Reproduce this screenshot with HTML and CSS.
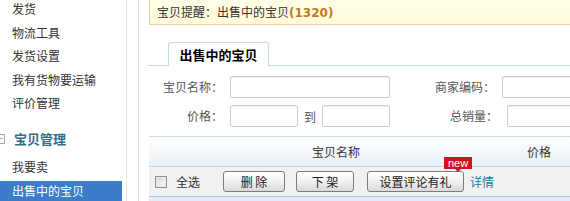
FILE: index.html
```html
<!DOCTYPE html>
<html lang="zh-CN">
<head>
<meta charset="utf-8">
<title>出售中的宝贝</title>
<link rel="stylesheet" href="styles.css">
</head>
<body>
<div class="page">
  <aside class="sidebar">
    <ul class="menu menu-top">
      <li>发货</li>
      <li>物流工具</li>
      <li>发货设置</li>
      <li>我有货物要运输</li>
      <li>评价管理</li>
    </ul>
    <div class="group-title"><span class="toggle"></span>宝贝管理</div>
    <ul class="menu menu-sub">
      <li>我要卖</li>
      <li class="active">出售中的宝贝</li>
    </ul>
  </aside>
  <main class="content">
    <div class="notice">宝贝提醒：出售中的宝贝<b class="count">(1320)</b></div>
    <div class="tabs"><div class="tab">出售中的宝贝</div></div>
    <div class="search">
      <div class="row">
        <span class="lbl lbl-a">宝贝名称：</span><span class="in in-name"></span>
        <span class="lbl lbl-b">商家编码：</span><span class="in in-code"></span>
      </div>
      <div class="row">
        <span class="lbl lbl-a">价格：</span><span class="in in-price"></span>
        <span class="to">到</span><span class="in in-price"></span>
        <span class="lbl lbl-c">总销量：</span><span class="in in-code"></span>
      </div>
    </div>
    <div class="thead">
      <div class="th th-name">宝贝名称</div>
      <div class="th th-price">价格</div>
    </div>
    <div class="toolbar">
      <span class="check"></span>
      <span class="check-label">全选</span>
      <span class="btn btn-del">删 除</span>
      <span class="btn btn-down">下 架</span>
      <span class="btn btn-gift">设置评论有礼<span class="badge">new</span></span>
      <a class="detail">详情</a>
    </div>
    <div class="after"></div>
  </main>
</div>
</body>
</html>
```

FILE: styles.css
```css
html, body {
  margin: 0;
  padding: 0;
  background: #fff;
}
body {
  width: 570px;
  height: 201px;
  overflow: hidden;
  font-family: "Noto Sans CJK SC", "Noto Sans", sans-serif;
  font-size: 12px;
  color: #333;
}
.page {
  display: flex;
  align-items: flex-start;
  width: 570px;
  height: 201px;
  overflow: hidden;
}

/* sidebar */
.sidebar {
  width: 126px;
  height: 201px;
  flex-shrink: 0;
  overflow: hidden;
  border-right: 1px solid #e3e3e3;
}
.menu {
  list-style: none;
  margin: 0;
  padding: 0;
}
.menu li {
  padding-left: 12px;
  margin-right: 4px;
  white-space: nowrap;
}
.menu-top {
  margin-top: -3px;
}
.menu-top li {
  height: 23.5px;
  line-height: 23.5px;
}
.group-title {
  display: flex;
  align-items: center;
  margin-top: 12px;
  height: 24px;
  line-height: 24px;
  font-size: 13px;
  font-weight: bold;
  color: #336e86;
}
.toggle {
  width: 8px;
  height: 8px;
  margin-left: -5px;
  margin-right: 9px;
  border: 1px solid #a9a9a9;
  background: linear-gradient(#a9a9a9, #a9a9a9) center / 5px 1px no-repeat, #fff;
}
.menu-sub {
  margin-top: 4px;
}
.menu-sub li {
  height: 24px;
  line-height: 24px;
}
.menu-sub li.active {
  margin-top: 2px;
  height: 22px;
  line-height: 20px;
  background: #3c7dca;
  color: #fff;
}

/* content */
.content {
  width: 560px;
  flex-shrink: 0;
  margin-left: 11px;
  border-left: 1px solid #dadada;
  padding-left: 10px;
  height: 201px;
  overflow: hidden;
}
.notice {
  height: 24px;
  line-height: 24px;
  border: 1px solid #e6d2a5;
  border-top: none;
  background: linear-gradient(#fffde8, #fffad8);
  padding-left: 7px;
  color: #333;
  white-space: nowrap;
}
.count {
  font-family: "DejaVu Sans", sans-serif;
  font-size: 12px;
  font-weight: bold;
  color: #c07a1f;
}
.tabs {
  display: flex;
  align-items: flex-end;
  margin-top: 17px;
  padding-left: 20px;
  margin-left: -1px;
  border-bottom: 1px solid #c8dbe3;
}
.tab {
  width: 99px;
  height: 23px;
  margin-bottom: -1px;
  border: 1px solid #c8dbe3;
  border-bottom: none;
  border-radius: 3px 3px 0 0;
  background: #fff;
  text-align: center;
  line-height: 23px;
  font-size: 13px;
  font-weight: bold;
  color: #000;
}

/* search form */
.search {
  padding-top: 10px;
  padding-bottom: 9px;
}
.row {
  display: flex;
  align-items: center;
  height: 22px;
  white-space: nowrap;
}
.row + .row {
  margin-top: 7px;
}
.lbl {
  text-align: right;
  color: #555;
  line-height: 22px;
}
.lbl-a {
  width: 74px;
  margin-right: 7px;
}
.lbl-b {
  width: 105px;
  margin-right: 7px;
}
.lbl-c {
  width: 108px;
  margin-right: 9px;
}
.in {
  box-sizing: border-box;
  height: 22px;
  border: 1px solid #cdcdcd;
  border-radius: 2px;
  background: #fff;
  box-shadow: inset 0 1px 0 #f0f0f0;
}
.in-name {
  width: 160px;
}
.in-code {
  width: 120px;
}
.in-price {
  width: 68px;
}
.to {
  width: 24px;
  text-align: center;
  color: #555;
}

/* table header */
.thead {
  display: flex;
  height: 29px;
  line-height: 29px;
  border-top: 1px solid #cbdde4;
  border-bottom: 1px solid #c4d6e6;
  background: linear-gradient(#ffffff, #eaf0f5);
  color: #333;
}
.th-name {
  width: 374px;
  text-align: center;
}
.th-price {
  padding-left: 4px;
}

/* toolbar */
.toolbar {
  display: flex;
  align-items: center;
  height: 29px;
  background: #eff1f3;
  border-bottom: 1px solid #adc4e3;
  white-space: nowrap;
}
.check {
  box-sizing: border-box;
  width: 12px;
  height: 12px;
  margin-left: 6px;
  border: 1px solid #8f8f8f;
  background: linear-gradient(135deg, #d6d6d6, #fafafa);
  box-shadow: inset 0 0 0 1px #e9e9e9;
}
.check-label {
  margin-left: 9px;
  color: #333;
}
.btn {
  position: relative;
  box-sizing: border-box;
  height: 21px;
  line-height: 19px;
  border: 1px solid #7d7d7d;
  border-radius: 3px;
  background: linear-gradient(#ffffff, #f3f3f3 45%, #d9d9d9);
  text-align: center;
  color: #222;
}
.btn-del {
  width: 62px;
  margin-left: 23px;
}
.btn-down {
  width: 58px;
  margin-left: 11px;
}
.btn-gift {
  width: 97px;
  margin-left: 13px;
}
.badge {
  position: absolute;
  left: 76px;
  top: -15px;
  width: 28px;
  height: 12px;
  line-height: 12px;
  background: #d5121b;
  color: #fff;
  font-family: "Liberation Sans", sans-serif;
  font-size: 11px;
  text-align: center;
}
.badge::after {
  content: "";
  position: absolute;
  left: 11px;
  bottom: -3px;
  border-left: 3px solid transparent;
  border-right: 3px solid transparent;
  border-top: 3px solid #d5121b;
}
.detail {
  margin-left: 6px;
  color: #25799f;
  text-decoration: none;
}
.after {
  height: 10px;
  background: #e4ecf6;
}
```
